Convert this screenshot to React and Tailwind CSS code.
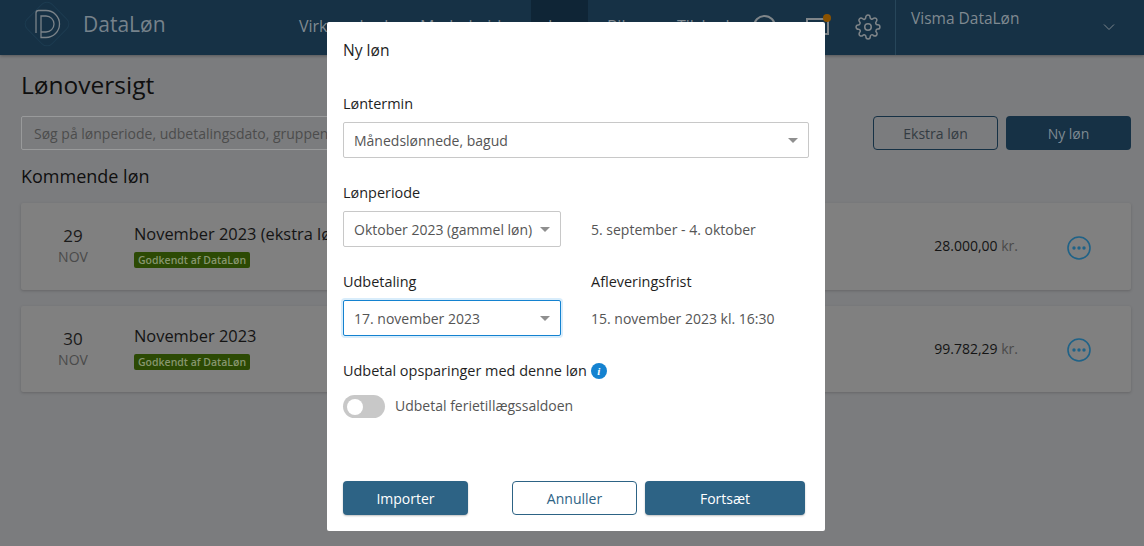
const font = { fontFamily: '"Open Sans", sans-serif' };

function Caret() {
  return <span className="w-0 h-0 border-x-[5px] border-x-transparent border-t-[5px] border-t-[#8f8f8f]" />;
}

function Select({ text, className }) {
  return (
    <div className={`h-9 flex items-center justify-between pl-[10px] pr-[10px] bg-white border border-[#c8c8c8] rounded-[2px] text-sm text-[#555555] ${className}`}>
      <span className="whitespace-nowrap pt-[1px]">{text}</span>
      <Caret />
    </div>
  );
}

function Logo() {
  return (
    <svg width="50" height="50" viewBox="22 0 50 50" fill="none" className="shrink-0">
      <rect x="29.5" y="6.5" width="35" height="35" rx="7" transform="rotate(45 47 24)" stroke="#1c3b50" />
      <path d="M36 33V13q0-2.5 2.5-2.5H46a13.5 13.5 0 0 1 0 27h-5V16h5a8 8 0 0 1 0 16h-5" stroke="#7b8389" strokeWidth="1.3" />
    </svg>
  );
}

function PayCard({ day, title, amount }) {
  return (
    <div className="h-[86.5px] bg-[#808080] rounded-[2px] shadow-[0_1px_3px_rgba(0,0,0,0.18)] flex items-center">
      <div className="w-[104px] mr-[9px] text-center shrink-0">
        <div className="text-[17px] leading-[22px] text-[#1a1a1a]">{day}</div>
        <div className="text-sm leading-[20px] text-[#4a4a4a]">NOV</div>
      </div>
      <div className="flex-1 min-w-0">
        <div className="-mt-[1px] text-[16.4px] leading-[24px] font-medium text-[#141414] whitespace-nowrap">{title}</div>
        <span className="inline-block mt-[3px] px-1 h-4 leading-4 rounded-[2px] bg-[#2c4a04] text-[#87966f] text-[10.5px] font-semibold">Godkendt af DataLøn</span>
      </div>
      <div className="text-sm text-[#141414] font-medium mr-[48px] whitespace-nowrap">
        {amount} <span className="font-normal text-[#4a4a4a]">kr.</span>
      </div>
      <svg width="26" height="26" viewBox="0 0 26 26" fill="none" className="mr-[39px] mt-[3px] shrink-0">
        <circle cx="13" cy="13" r="11" stroke="#1f6287" strokeWidth="1.6" />
        <circle cx="8" cy="13" r="1.7" fill="#1f6287" />
        <circle cx="13" cy="13" r="1.7" fill="#1f6287" />
        <circle cx="18" cy="13" r="1.7" fill="#1f6287" />
      </svg>
    </div>
  );
}

const labelClass = "text-[14.45px] leading-5 font-medium text-[#1f1f1f]";

export default function App() {
  return (
    <div className="relative w-[1144px] h-[546px] overflow-hidden bg-[#7b7c7e]" style={font}>
      {/* nav */}
      <header className="h-[55px] bg-[#163145] shadow-[0_1px_3px_rgba(0,0,0,0.3)] flex items-start">
        <div className="pl-[22px] h-[50px] flex items-center">
          <Logo />
          <span className="ml-[11px] text-[21px] text-[#76828b]">DataLøn</span>
        </div>
        <div className="absolute left-[531px] top-0 w-[57px] h-[55px] bg-[#0f2536]" />
        <nav className="absolute left-[299px] top-[16px] text-base leading-5 text-[#808a91] flex">
          <span className="w-[121px]">Virksomhed</span>
          <span className="w-[128px]">Medarbejder</span>
          <span className="w-[59px]">Løn</span>
          <span className="w-[70px]">Bilag</span>
          <span>Tilskud</span>
        </nav>
        <div className="ml-auto h-[55px] w-[249px] border-l border-[#27465a] pl-[15px] pt-2 flex justify-between">
          <span className="text-[15.5px] leading-5 text-[#808a91]">Visma DataLøn</span>
          <svg width="12" height="8" viewBox="0 0 12 8" fill="none" className="mt-[15px] mr-[29px]">
            <path d="M1 1.5l5 5 5-5" stroke="#7b858c" />
          </svg>
        </div>
        <svg width="26" height="26" viewBox="0 0 24 24" fill="none" stroke="#7f8589" strokeWidth="1.4" className="absolute left-[855px] top-[14px]">
          <circle cx="12" cy="12" r="3" />
          <path d="M19.4 15a1.65 1.65 0 0 0 .33 1.82l.06.06a2 2 0 1 1-2.83 2.83l-.06-.06a1.65 1.65 0 0 0-2.82 1.17V21a2 2 0 1 1-4 0v-.09a1.65 1.65 0 0 0-2.82-1.17l-.06.06a2 2 0 1 1-2.83-2.83l.06-.06a1.65 1.65 0 0 0-1.17-2.82H3a2 2 0 1 1 0-4h.09a1.65 1.65 0 0 0 1.17-2.82l-.06-.06a2 2 0 1 1 2.83-2.83l.06.06a1.65 1.65 0 0 0 2.82-1.17V3a2 2 0 1 1 4 0v.09a1.65 1.65 0 0 0 2.82 1.17l.06-.06a2 2 0 1 1 2.83 2.83l-.06.06a1.65 1.65 0 0 0 1.17 2.82H21a2 2 0 1 1 0 4h-.09a1.65 1.65 0 0 0-1.51 1.09z" />
        </svg>
        <div className="absolute left-[753px] top-[15px] w-[23px] h-[23px] rounded-full border-2 border-[#7f8589]" />
        <div className="absolute left-[806px] top-[18px] w-[23px] h-[17px] border-2 border-[#7f8589]" />
      </header>

      {/* page */}
      <main className="pl-[21px] pr-[13px]">
        <h1 className="mt-[14px] text-[24.5px] leading-8 font-medium text-[#0f0f0f]">Lønoversigt</h1>
        <div className="mt-[15px] flex">
          <div className="w-[800px] h-[34px] border border-[#999a9b] rounded-[2px] pl-3 text-sm leading-[34px] text-[#4c4c4c]">
            Søg på lønperiode, udbetalingsdato, gruppenavn
          </div>
          <div className="ml-auto w-[125px] h-[34px] border border-[#163145] rounded-[4px] text-center text-sm leading-[34px] text-[#333b42]">Ekstra løn</div>
          <div className="ml-2 w-[125px] h-[34px] bg-[#163145] rounded-[4px] text-center text-sm leading-[36px] text-[#7f8a92]">Ny løn</div>
        </div>
        <h2 className="mt-[14px] text-[18px] leading-6 font-medium text-[#0f0f0f]">Kommende løn</h2>
        <div className="mt-[15px] flex flex-col gap-4">
          <PayCard day="29" title="November 2023 (ekstra løn)" amount="28.000,00" />
          <PayCard day="30" title="November 2023" amount="99.782,29" />
        </div>
      </main>

      {/* modal */}
      <div className="absolute left-[327px] top-[22px] w-[498px] h-[509px] bg-white rounded-[2px] text-[#555555] px-4">
        <div className="pt-[18px] text-[15.6px] leading-5 font-medium text-[#1f1f1f]">Ny løn</div>
        <div className={`mt-[34px] ${labelClass}`}>Løntermin</div>
        <Select text="Månedslønnede, bagud" className="mt-[8px] w-[466px]" />
        <div className={`mt-[25px] ${labelClass}`}>Lønperiode</div>
        <div className="mt-[8px] flex items-center">
          <Select text="Oktober 2023 (gammel løn)" className="w-[218px]" />
          <span className="ml-[30px] text-sm pt-[1px]">5. september - 4. oktober</span>
        </div>
        <div className={`mt-[25px] flex ${labelClass}`}>
          <span className="w-[248px]">Udbetaling</span>
          <span>Afleveringsfrist</span>
        </div>
        <div className="mt-[8px] flex items-center">
          <Select text="17. november 2023" className="w-[218px] !border-[#1482d0] shadow-[0_0_0_2px_#d9edfb]" />
          <span className="ml-[30px] text-sm pt-[1px]">15. november 2023 kl. 16:30</span>
        </div>
        <div className={`mt-[25px] flex items-center ${labelClass}`}>
          Udbetal opsparinger med denne løn
          <span className="ml-1 w-4 h-4 rounded-full bg-[#1482d0] text-white text-[11px] leading-4 text-center font-bold italic" style={{ fontFamily: '"Liberation Serif", serif' }}>i</span>
        </div>
        <div className="mt-[14px] flex items-center">
          <div className="w-[42px] h-[23px] rounded-full bg-[#c8c8c8] flex items-center pl-1">
            <div className="w-4 h-4 rounded-full bg-white" />
          </div>
          <span className="ml-[10px] text-sm pb-[2px]">Udbetal ferietillægssaldoen</span>
        </div>
        <div className="mt-[63px] flex text-sm">
          <div className="w-[125px] h-[34px] bg-[#2d6385] rounded-[4px] text-center leading-[36px] font-medium text-white shadow-[0_1px_2px_rgba(0,0,0,0.25)]">Importer</div>
          <div className="ml-[44px] w-[125px] h-[34px] border border-[#2d6385] rounded-[4px] text-center leading-[34px] text-[#2d6385]">Annuller</div>
          <div className="ml-2 w-[160px] h-[34px] bg-[#2d6385] rounded-[4px] text-center leading-[36px] font-medium text-white shadow-[0_1px_2px_rgba(0,0,0,0.25)]">Fortsæt</div>
        </div>
      </div>
      {/* badge dot pokes out over the modal corner */}
      <div className="absolute left-[823px] top-[14px] w-2 h-2 rounded-full bg-[#8a5200]" />
    </div>
  );
}
